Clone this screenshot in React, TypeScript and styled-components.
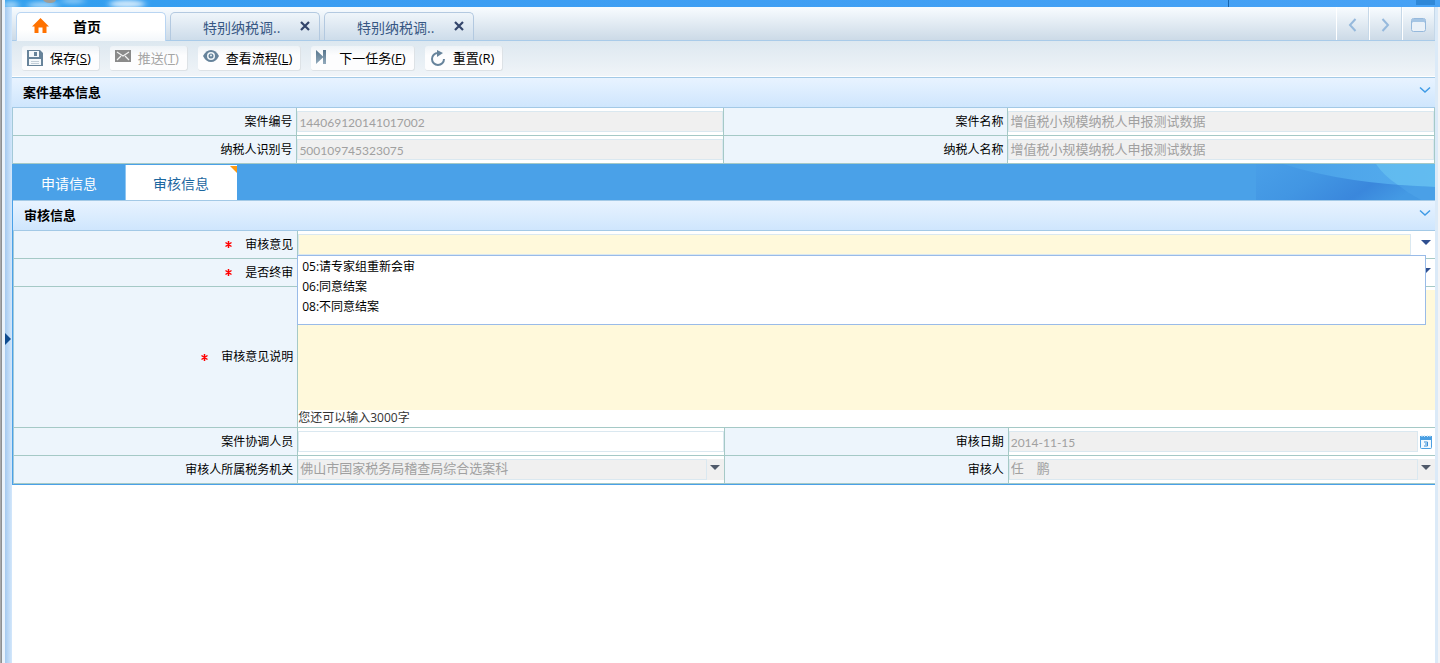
import React, { useState } from "react";
import styled, { createGlobalStyle, css } from "styled-components";

const uiFont = '"Open Sans", "Noto Sans CJK SC", sans-serif';
const fieldFont = '"Liberation Sans", "Noto Sans CJK SC", sans-serif';
const digitFont = 'Lato, "Liberation Sans", sans-serif';

const GlobalStyle = createGlobalStyle`
  *, *::before, *::after { box-sizing: border-box; }
  body { margin: 0; background: #fff; color: #000; font: 12px/18px ${uiFont}; }
  button, input, select, textarea { font: inherit; color: inherit; margin: 0; padding: 0; border: 0; background: none; border-radius: 0; }
  button { cursor: pointer; }
  h2, ul { margin: 0; padding: 0; }
`;

const Shell = styled.div`
  display: flex;
  min-height: 100vh;
`;

const WindowEdge = styled.div`
  width: 5px;
  flex: none;
  background: linear-gradient(90deg, #a9a9a9 0 1px, #8c8f91 1px 2px, #e9f2fa 2px);
`;

const Frame = styled.div`
  flex: 1;
  min-width: 0;
  display: flex;
  flex-direction: column;
`;

const Banner = styled.header`
  height: 7px;
  display: flex;
  justify-content: space-between;
  background: linear-gradient(90deg, #2f9fee 0, #3a9df2 300px, #47a2f5);
  overflow: hidden;
`;

const BannerEnd = styled.span`
  width: 212px;
  display: flex;
  justify-content: flex-end;
  border-left: 1px solid #1765ad;
  padding-right: 5px;
`;

const BannerButton = styled.span`
  width: 19px;
  height: 5px;
  background: #2f88d8;
`;

const Body = styled.div`
  flex: 1;
  display: flex;
`;

const Gutter = styled.aside`
  width: 7px;
  flex: none;
  display: flex;
  align-items: center;
  padding-top: 8px;
  background: linear-gradient(90deg, #a5caef, #d3e7fb);
`;

const GutterButton = styled.button`
  width: 7px;
  height: 16px;
  display: flex;
  align-items: center;
`;

const RightRail = styled.div`
  width: 5px;
  flex: none;
  background: linear-gradient(90deg, #dbeaf8 0 3px, #f3f4f6 3px);
`;

const Main = styled.main`
  flex: 1;
  min-width: 0;
`;

const TabBar = styled.nav`
  height: 34px;
  display: flex;
  align-items: flex-end;
  gap: 4px;
  padding-left: 4px;
  border-bottom: 1px solid #a9cbe9;
  background: linear-gradient(#f8fcff, #ccdae7);
`;

const Tab = styled.div<{ $active?: boolean }>`
  width: 150px;
  height: 28px;
  display: flex;
  align-items: center;
  padding: 0 9px 2px ${(p) => (p.$active ? 15 : 32)}px;
  gap: ${(p) => (p.$active ? 24 : 0)}px;
  justify-content: ${(p) => (p.$active ? "flex-start" : "space-between")};
  border: 1px solid #b3c9e0;
  border-bottom: 0;
  border-radius: 5px 5px 0 0;
  background: linear-gradient(#eff5fa, #cddcea);
  color: #375783;
  font-size: 14px;
  ${(p) =>
    p.$active &&
    css`
      height: 29px;
      margin-bottom: -1px;
      border-color: #b9d5f2;
      background: linear-gradient(#fff 60%, #f3f7fa);
      color: #000;
    `}
`;

const TabLabel = styled.button<{ $strong?: boolean }>`
  line-height: 20px;
  font-weight: ${(p) => (p.$strong ? 700 : 400)};
  padding-top: ${(p) => (p.$strong ? 2 : 4)}px;
`;

const CloseButton = styled.button`
  width: 10px;
  height: 10px;
  display: flex;
`;

const TabTools = styled.div`
  align-self: stretch;
  margin-left: auto;
  display: flex;
`;

const TabTool = styled.button`
  width: 33px;
  display: flex;
  align-items: center;
  justify-content: center;
  padding-top: 3px;
  border-left: 1px solid #fff;
  border-right: 1px solid #c6d8e8;
`;

const Toolbar = styled.div`
  height: 36px;
  display: flex;
  align-items: flex-start;
  gap: 10px;
  padding: 5px 10px;
  background: linear-gradient(#dde8f0, #f0f4f8);
  border-bottom: 1px solid #fff;
`;

const ToolButton = styled.button`
  height: 25px;
  display: flex;
  align-items: center;
  gap: 7px;
  padding: 0 8px 0 5px;
  border: 0 solid #dde2e6;
  border-width: 0 1px 1px 0;
  border-radius: 3px;
  background: linear-gradient(#eef3f7, #fdfdfe 40%);
  font-size: 13px;
  white-space: nowrap;
  &:disabled { color: #a5a5a5; cursor: default; }
  svg { flex: none; }
`;

const SectionHead = styled.div`
  height: 31px;
  display: flex;
  align-items: center;
  justify-content: space-between;
  padding: 0 4px 2px 11px;
  border: 1px solid #a3c9e6;
  border-width: 1px 0;
  background: linear-gradient(#e8f3ff, #cfe6fd);
`;

const SectionTitle = styled.h2`
  font-size: 13px;
  line-height: 20px;
`;

const Fold = styled.button`
  width: 12px;
  height: 12px;
  display: flex;
`;

const Review = styled.section`
  border-left: 1px solid #4aa1e8;
  border-bottom: 1px solid #4aa1e8;
`;

const FormGrid = styled.form`
  border-left: 1px solid #a3c9d8;
`;

const Row = styled.div<{ $wide?: boolean }>`
  display: grid;
  grid-template-columns: ${(p) => (p.$wide ? "2fr 8fr" : "2fr 3fr 2fr 3fr")};
  min-height: 28px;
  border-bottom: 1px solid #a5c9c6;
`;

const Label = styled.label`
  display: flex;
  align-items: center;
  justify-content: flex-end;
  padding-right: 4px;
  border-right: 1px solid #a5c9c6;
  background: #edf5fc;
`;

const Required = styled.span`
  margin-right: 13px;
  color: #f00;
  display: flex;
`;

const Cell = styled.div<{ $edge?: boolean }>`
  position: relative;
  min-width: 0;
  display: flex;
  align-items: center;
  border-right: ${(p) => (p.$edge ? "1px solid #a5c9c6" : "0")};
`;

const boxStyle = css`
  flex: 1;
  min-width: 0;
  height: 21px;
  padding: 0 1px 2px;
  border: 1px solid #dae8f0;
  background: #fff;
  font: 13px/17px ${fieldFont};
  &:disabled { background: #f0f0f0; color: #a0a0a0; opacity: 1; }
`;

const TextBox = styled.input<{ $digits?: boolean }>`
  ${boxStyle}
  ${(p) =>
    p.$digits &&
    css`
      padding: 2px 1px 0;
      font: 12px/17px ${digitFont};
    `}
`;

const requiredBox = css`
  ${boxStyle}
  margin-right: 7px;
  background: #fff9db;
`;

const ComboBox = styled.input`
  ${requiredBox}
`;

const ComboSelect = styled.select`
  ${requiredBox}
  appearance: none;
`;

const SelectBox = styled.select`
  ${boxStyle}
  appearance: none;
`;

const Trigger = styled.button`
  width: 17px;
  height: 21px;
  display: flex;
  padding: 6px 3px;
  &:disabled { background: #f0f0f0; }
`;

const DateButton = styled.button`
  width: 17px;
  height: 21px;
  display: flex;
  align-items: center;
  padding-left: 2px;
`;

const NoteCell = styled.div`
  display: flex;
  flex-direction: column;
  padding: 3px 0 1px;
`;

const NoteBox = styled.textarea`
  height: 120px;
  background: #fff9db;
  resize: none;
`;

const Hint = styled.span`
  line-height: 16px;
  color: #333;
`;

const OptionList = styled.ul`
  position: absolute;
  z-index: 2;
  top: 24px;
  left: -1px;
  right: 9px;
  padding: 1px 0 7px;
  border: 1px solid #99bbe8;
  background: #fff;
  list-style: none;
`;

const Option = styled.li`
  padding: 0 4px;
  line-height: 20px;
  cursor: pointer;
  &:hover { background: #e4f0fb; }
`;

const SubTabs = styled.div`
  height: 36px;
  display: flex;
  justify-content: space-between;
  background: #4aa1e8;
`;

const SubTabList = styled.div`
  display: flex;
  padding-top: 1px;
`;

const SubTab = styled.button<{ $active?: boolean }>`
  position: relative;
  padding: 2px 28px 0 27px;
  border-left: 1px solid ${(p) => (p.$active ? "#8fc6f2" : "transparent")};
  background: ${(p) => (p.$active ? "#fff" : "transparent")};
  color: ${(p) => (p.$active ? "#1c679f" : "#fff")};
  font-size: 14px;
`;

const Corner = styled.svg`
  position: absolute;
  top: 1px;
  right: 0;
`;

const Clouds = () => (
  <svg width="240" height="7" viewBox="0 0 240 7" aria-hidden="true">
    <defs>
      <filter id="soft" x="-40%" y="-200%" width="180%" height="500%">
        <feGaussianBlur stdDeviation="3 2" />
      </filter>
    </defs>
    <g fill="#fff" filter="url(#soft)">
      <ellipse cx="6" cy="5" rx="8" ry="4" opacity=".5" />
      <ellipse cx="38" cy="5" rx="16" ry="3" opacity=".55" />
      <ellipse cx="68" cy="1" rx="12" ry="3" opacity=".4" />
      <ellipse cx="122" cy="4" rx="18" ry="4" opacity=".75" />
    </g>
    <path d="M38 0h13q-1 3-6 3t-7-3z" fill="#a09d95" />
  </svg>
);

const Home = () => (
  <svg width="17" height="16" viewBox="0 0 17 16" aria-hidden="true">
    <path d="M8.500 0 17 8.500h-2.500V15h-4V9.500h-4V15h-4V8.500H0z" fill="#ff7200" />
  </svg>
);

const Cross = () => (
  <svg width="10" height="10" viewBox="0 0 10 10" aria-hidden="true">
    <path d="M1 1l8 8M9 1 1 9" stroke="#33456b" strokeWidth="2.200" />
  </svg>
);

const Chevron = ({ flip }: { flip?: boolean }) => (
  <svg width="9" height="14" viewBox="0 0 9 14" fill="none" stroke="#96b9dc" strokeWidth="2" aria-hidden="true">
    <path d={flip ? "M1.500 1 7 7l-5.500 6" : "M7.500 1 2 7l5.500 6"} />
  </svg>
);

const WindowIcon = () => (
  <svg width="15" height="14" viewBox="0 0 15 14" aria-hidden="true">
    <rect x=".5" y=".5" width="14" height="13" rx="2" fill="#eaf1f8" stroke="#96b9dc" />
    <path d="M1 1h13v4l-1-1H2L1 5z" fill="#a5c5e4" />
  </svg>
);

const SaveIcon = () => (
  <svg width="16" height="16" viewBox="0 0 16 16" aria-hidden="true">
    <path d="M0 0h13l3 3v13H0z" fill="#67839a" />
    <path d="M2 1h10v6H2zM2 9h12v6H2z" fill="#f4f8fb" />
    <path d="M7 2h3v4H7z" fill="#67839a" />
    <path d="M4 11.500h8M4 13.500h8" stroke="#c2ced8" />
  </svg>
);

const MailIcon = () => (
  <svg width="16" height="16" viewBox="0 0 16 16" aria-hidden="true">
    <path d="M0 0h16v12H0z" fill="#8a8a8a" />
    <path d="M2 2l6 4 6-4M2 10l4-4M14 10l-4-4" stroke="#f2f2f2" strokeWidth="1.200" fill="none" />
  </svg>
);

const EyeIcon = () => (
  <svg width="16" height="16" viewBox="0 0 16 16" aria-hidden="true">
    <path d="M0 6Q3 0 8 0t8 6q-3 6-8 6T0 6z" fill="#66839b" />
    <circle cx="8" cy="6" r="4" fill="#f2f7fa" />
    <circle cx="8" cy="6" r="2.500" fill="#66839b" />
    <circle cx="8" cy="5.500" r="1" fill="#e8f0f5" />
  </svg>
);

const NextIcon = () => (
  <svg width="16" height="16" viewBox="0 0 16 16" aria-hidden="true">
    <defs>
      <linearGradient id="steel" x2="0" y2="1">
        <stop offset="0" stopColor="#56748c" />
        <stop offset="1" stopColor="#93abbd" />
      </linearGradient>
    </defs>
    <path d="M0 0l7 6.500V0h3v14H7V7.500L0 14z" fill="url(#steel)" />
  </svg>
);

const ResetIcon = () => (
  <svg width="16" height="16" viewBox="0 0 16 16" aria-hidden="true">
    <path d="M8 3a6 6 0 1 0 6 6" fill="none" stroke="#66839b" strokeWidth="2" />
    <path d="M7 0l6 3-6 4z" fill="#66839b" />
  </svg>
);

const FoldIcon = () => (
  <svg width="12" height="8" viewBox="0 0 12 8" aria-hidden="true">
    <path d="M1 1.500l5 4.500 5-4.500" fill="none" stroke="#3f9be6" strokeWidth="1.500" />
  </svg>
);

const Caret = ({ color }: { color: string }) => (
  <svg width="10" height="5" viewBox="0 0 10 5" aria-hidden="true">
    <path d="M0 0h10L5 5z" fill={color} />
  </svg>
);

const CalendarIcon = () => (
  <svg width="12" height="14" viewBox="0 0 12 14" aria-hidden="true">
    <rect x=".5" y="1.500" width="11" height="12" rx="1" fill="#f2f9ff" stroke="#4a9fe2" />
    <path d="M0 1h12v4H0z" fill="#4a9fe2" />
    <path d="M2 0v2M4.500 0v2M7.500 0v2M10 0v2" stroke="#cfe6f8" />
    <path d="M4 7h3.500v4H4M5 9h2.500" fill="none" stroke="#3b8fd6" />
  </svg>
);

const Star = () => (
  <Required aria-label="必填">
    <svg width="7" height="7" viewBox="0 0 7 7" aria-hidden="true">
      <path d="M3.500 0v7M.5 1.500l6 4M6.500 1.500l-6 4" stroke="#f00" strokeWidth="1.500" />
    </svg>
  </Required>
);

const Wave = () => (
  <svg width="179" height="36" viewBox="0 0 179 36" aria-hidden="true">
    <defs>
      <linearGradient id="sea" y2=".3">
        <stop offset="0" stopColor="#499fe8" />
        <stop offset=".4" stopColor="#4296e3" />
        <stop offset=".75" stopColor="#3a87dc" />
        <stop offset="1" stopColor="#449ae4" />
      </linearGradient>
      <linearGradient id="sky">
        <stop offset="0" stopColor="#4aa1e8" />
        <stop offset="1" stopColor="#55adee" />
      </linearGradient>
    </defs>
    <path d="M0 0h179v36H0z" fill="url(#sea)" />
    <path d="M27 0h152v23Q90 20 27 0z" fill="url(#sky)" />
    <path d="M120 0h59v23l-37-2Q128 12 120 0z" fill="#6dc8f2" opacity=".55" />
    <path d="M142 21l37 2v13h-14q-12-6-23-15z" fill="#4fa6ea" opacity=".5" />
  </svg>
);

const tools = [
  { text: "保存", hotkey: "S", icon: <SaveIcon /> },
  { text: "推送", hotkey: "T", icon: <MailIcon />, disabled: true },
  { text: "查看流程", hotkey: "L", icon: <EyeIcon /> },
  { text: "下一任务", hotkey: "F", icon: <NextIcon /> },
  { text: "重置", hotkey: "R", icon: <ResetIcon />, plain: true },
];

const opinions = ["05:请专家组重新会审", "06:同意结案", "08:不同意结案"];

const caseRows = [
  [
    { id: "caseNo", label: "案件编号", value: "144069120141017002", digits: true },
    { id: "caseName", label: "案件名称", value: "增值税小规模纳税人申报测试数据" },
  ],
  [
    { id: "taxNo", label: "纳税人识别号", value: "500109745323075", digits: true },
    { id: "taxName", label: "纳税人名称", value: "增值税小规模纳税人申报测试数据" },
  ],
];

const Section = ({ title }: { title: string }) => (
  <SectionHead>
    <SectionTitle>{title}</SectionTitle>
    <Fold type="button" aria-label={`折叠${title}`}>
      <FoldIcon />
    </Fold>
  </SectionHead>
);

export default function App() {
  const [open, setOpen] = useState(true);
  const [opinion, setOpinion] = useState("");

  return (
    <>
      <GlobalStyle />
      <Shell>
        <WindowEdge />
        <Frame>
          <Banner>
            <Clouds />
            <BannerEnd>
              <BannerButton />
            </BannerEnd>
          </Banner>
          <Body>
            <Gutter>
              <GutterButton type="button" aria-label="展开菜单">
                <svg width="6" height="12" viewBox="0 0 6 12" aria-hidden="true">
                  <path d="M0 0l6 6-6 6z" fill="#0f4c8f" />
                </svg>
              </GutterButton>
            </Gutter>
            <Main>
              <TabBar>
                <Tab $active>
                  <Home />
                  <TabLabel type="button" $strong>首页</TabLabel>
                </Tab>
                {[1, 2].map((n) => (
                  <Tab key={n}>
                    <TabLabel type="button">特别纳税调..</TabLabel>
                    <CloseButton type="button" aria-label="关闭"><Cross /></CloseButton>
                  </Tab>
                ))}
                <TabTools>
                  <TabTool type="button" aria-label="向左"><Chevron /></TabTool>
                  <TabTool type="button" aria-label="向右"><Chevron flip /></TabTool>
                  <TabTool type="button" aria-label="窗口"><WindowIcon /></TabTool>
                </TabTools>
              </TabBar>
              <Toolbar>
                {tools.map((t) => (
                  <ToolButton key={t.hotkey} type="button" disabled={t.disabled}>
                    {t.icon}
                    <span>
                      {t.text}({t.plain ? t.hotkey : <u>{t.hotkey}</u>})
                    </span>
                  </ToolButton>
                ))}
              </Toolbar>
              <Section title="案件基本信息" />
              <FormGrid>
                {caseRows.map((row) => (
                  <Row key={row[0].id}>
                    {row.map((f) => (
                      <React.Fragment key={f.id}>
                        <Label htmlFor={f.id}>{f.label}</Label>
                        <Cell $edge>
                          <TextBox id={f.id} defaultValue={f.value} $digits={f.digits} disabled />
                        </Cell>
                      </React.Fragment>
                    ))}
                  </Row>
                ))}
              </FormGrid>
              <Review>
                <SubTabs>
                  <SubTabList role="tablist">
                    <SubTab type="button" role="tab" aria-selected={false}>申请信息</SubTab>
                    <SubTab type="button" role="tab" aria-selected $active>
                      审核信息
                      <Corner width="7" height="7" viewBox="0 0 7 7" aria-hidden="true">
                        <path d="M0 0h7v7z" fill="#ff9a12" />
                      </Corner>
                    </SubTab>
                  </SubTabList>
                  <Wave />
                </SubTabs>
                <Section title="审核信息" />
                <FormGrid>
                  <Row $wide>
                    <Label htmlFor="opinion"><Star />审核意见</Label>
                    <Cell>
                      <ComboBox
                        id="opinion"
                        role="combobox"
                        aria-expanded={open}
                        aria-controls="opinionList"
                        value={opinion}
                        readOnly
                      />
                      <Trigger type="button" aria-label="选择审核意见" onClick={() => setOpen(!open)}>
                        <Caret color="#2f4f8f" />
                      </Trigger>
                      {open && (
                        <OptionList id="opinionList" role="listbox">
                          {opinions.map((o) => (
                            <Option
                              key={o}
                              role="option"
                              aria-selected={o === opinion}
                              onClick={() => {
                                setOpinion(o);
                                setOpen(false);
                              }}
                            >
                              {o}
                            </Option>
                          ))}
                        </OptionList>
                      )}
                    </Cell>
                  </Row>
                  <Row $wide>
                    <Label htmlFor="final"><Star />是否终审</Label>
                    <Cell>
                      <ComboSelect id="final" defaultValue="">
                        <option value="" />
                      </ComboSelect>
                      <Trigger type="button" aria-label="选择是否终审">
                        <Caret color="#2f4f8f" />
                      </Trigger>
                    </Cell>
                  </Row>
                  <Row $wide>
                    <Label htmlFor="note"><Star />审核意见说明</Label>
                    <NoteCell>
                      <NoteBox id="note" maxLength={3000} />
                      <Hint>您还可以输入3000字</Hint>
                    </NoteCell>
                  </Row>
                  <Row>
                    <Label htmlFor="coordinator">案件协调人员</Label>
                    <Cell $edge>
                      <TextBox id="coordinator" />
                    </Cell>
                    <Label htmlFor="date">审核日期</Label>
                    <Cell>
                      <TextBox id="date" defaultValue="2014-11-15" $digits disabled />
                      <DateButton type="button" aria-label="选择日期"><CalendarIcon /></DateButton>
                    </Cell>
                  </Row>
                  <Row>
                    <Label htmlFor="office">审核人所属税务机关</Label>
                    <Cell $edge>
                      <SelectBox id="office" disabled>
                        <option>佛山市国家税务局稽查局综合选案科</option>
                      </SelectBox>
                      <Trigger type="button" disabled aria-label="选择税务机关"><Caret color="#505a6a" /></Trigger>
                    </Cell>
                    <Label htmlFor="reviewer">审核人</Label>
                    <Cell>
                      <SelectBox id="reviewer" disabled>
                        <option>任　鹏</option>
                      </SelectBox>
                      <Trigger type="button" disabled aria-label="选择审核人"><Caret color="#505a6a" /></Trigger>
                    </Cell>
                  </Row>
                </FormGrid>
              </Review>
            </Main>
            <RightRail />
          </Body>
        </Frame>
      </Shell>
    </>
  );
}
